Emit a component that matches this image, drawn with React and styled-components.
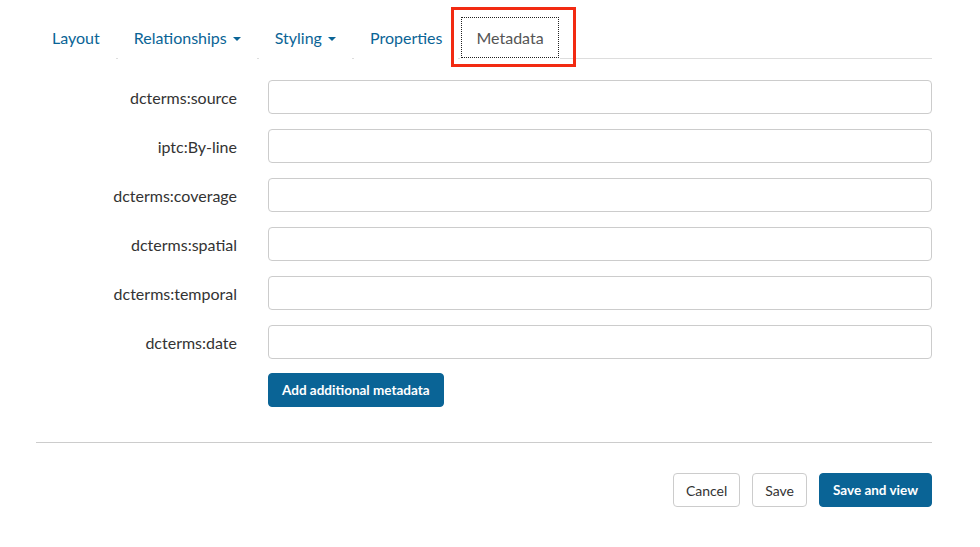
import React from "react";
import styled, { createGlobalStyle } from "styled-components";

const GlobalStyle = createGlobalStyle`
  body {
    margin: 0;
    background: #ffffff;
    font-family: Lato, "Open Sans", sans-serif;
    color: #333333;
  }
`;

const Page = styled.div`
  width: 896px;
  margin-left: 36px;
  padding-top: 16px;
`;

const Tabs = styled.ul`
  display: flex;
  list-style: none;
  margin: 0;
  padding: 0;
  border-bottom: 1px solid #dddddd;
`;

const Tab = styled.li`
  position: relative;
  margin-right: 2px;
  margin-bottom: -1px;
`;

const TabLink = styled.a`
  display: flex;
  align-items: center;
  height: 43px;
  box-sizing: border-box;
  padding: 0 15px;
  font-size: 16px;
  color: ${(p) => (p.active ? "#555555" : "#0a6496")};
  text-decoration: none;
  background: #ffffff;
  border: 1px solid ${(p) => (p.active ? "#ffffff" : "transparent")};
  outline: ${(p) => (p.active ? "1px dotted #222" : "none")};
  outline-offset: -2px;
`;

const Caret = styled.span`
  display: inline-block;
  width: 0;
  height: 0;
  margin-left: 6px;
  margin-top: 2px;
  border-top: 4px solid #0a6496;
  border-left: 4.5px solid transparent;
  border-right: 4.5px solid transparent;
`;

const Highlight = styled.span`
  position: absolute;
  left: -9px;
  right: -16px;
  top: -9px;
  bottom: -8px;
  border: 3px solid #f22a12;
  pointer-events: none;
`;

const Form = styled.div`
  display: grid;
  grid-template-columns: 201px 1fr;
  column-gap: 31px;
  row-gap: 15px;
  padding-top: 21px;
`;

const Label = styled.label`
  font-size: 16px;
  text-align: right;
  align-self: center;
  padding-top: 1px;
  color: #333333;
`;

const Input = styled.input`
  height: 34px;
  box-sizing: border-box;
  border: 1px solid #cccccc;
  border-radius: 4px;
  padding: 6px 12px;
  font-size: 14px;
  font-family: inherit;
`;

const Button = styled.button`
  height: 34px;
  box-sizing: border-box;
  padding: 0 ${(p) => (p.primary ? 13 : 12)}px;
  border-radius: 4px;
  font-family: inherit;
  font-size: ${(p) => (p.primary ? 13.5 : 14)}px;
  font-weight: ${(p) => (p.primary ? 700 : 400)};
  color: ${(p) => (p.primary ? "#ffffff" : "#333333")};
  background: ${(p) => (p.primary ? "#0a6496" : "#ffffff")};
  border: 1px solid ${(p) => (p.primary ? "#0a6496" : "#cccccc")};
`;

const AddRow = styled.div`
  grid-column: 2;
  margin-top: -1px;
`;

const Divider = styled.hr`
  border: 0;
  border-top: 1px solid #cccccc;
  margin: 35px 0 30px;
`;

const Footer = styled.div`
  display: flex;
  justify-content: flex-end;
  gap: 12px;
`;

const tabs = [
  { name: "Layout" },
  { name: "Relationships", caret: true },
  { name: "Styling", caret: true },
  { name: "Properties" },
  { name: "Metadata", active: true },
];

const fields = [
  "dcterms:source",
  "iptc:By-line",
  "dcterms:coverage",
  "dcterms:spatial",
  "dcterms:temporal",
  "dcterms:date",
];

export default function App() {
  return (
    <Page>
      <GlobalStyle />
      <Tabs>
        {tabs.map((t) => (
          <Tab key={t.name}>
            <TabLink href="#" active={t.active ? 1 : 0}>
              {t.name}
              {t.caret && <Caret />}
            </TabLink>
            {t.active && <Highlight />}
          </Tab>
        ))}
      </Tabs>
      <Form>
        {fields.map((f) => (
          <React.Fragment key={f}>
            <Label>{f}</Label>
            <Input type="text" />
          </React.Fragment>
        ))}
        <AddRow>
          <Button primary>Add additional metadata</Button>
        </AddRow>
      </Form>
      <Divider />
      <Footer>
        <Button>Cancel</Button>
        <Button>Save</Button>
        <Button primary>Save and view</Button>
      </Footer>
    </Page>
  );
}
